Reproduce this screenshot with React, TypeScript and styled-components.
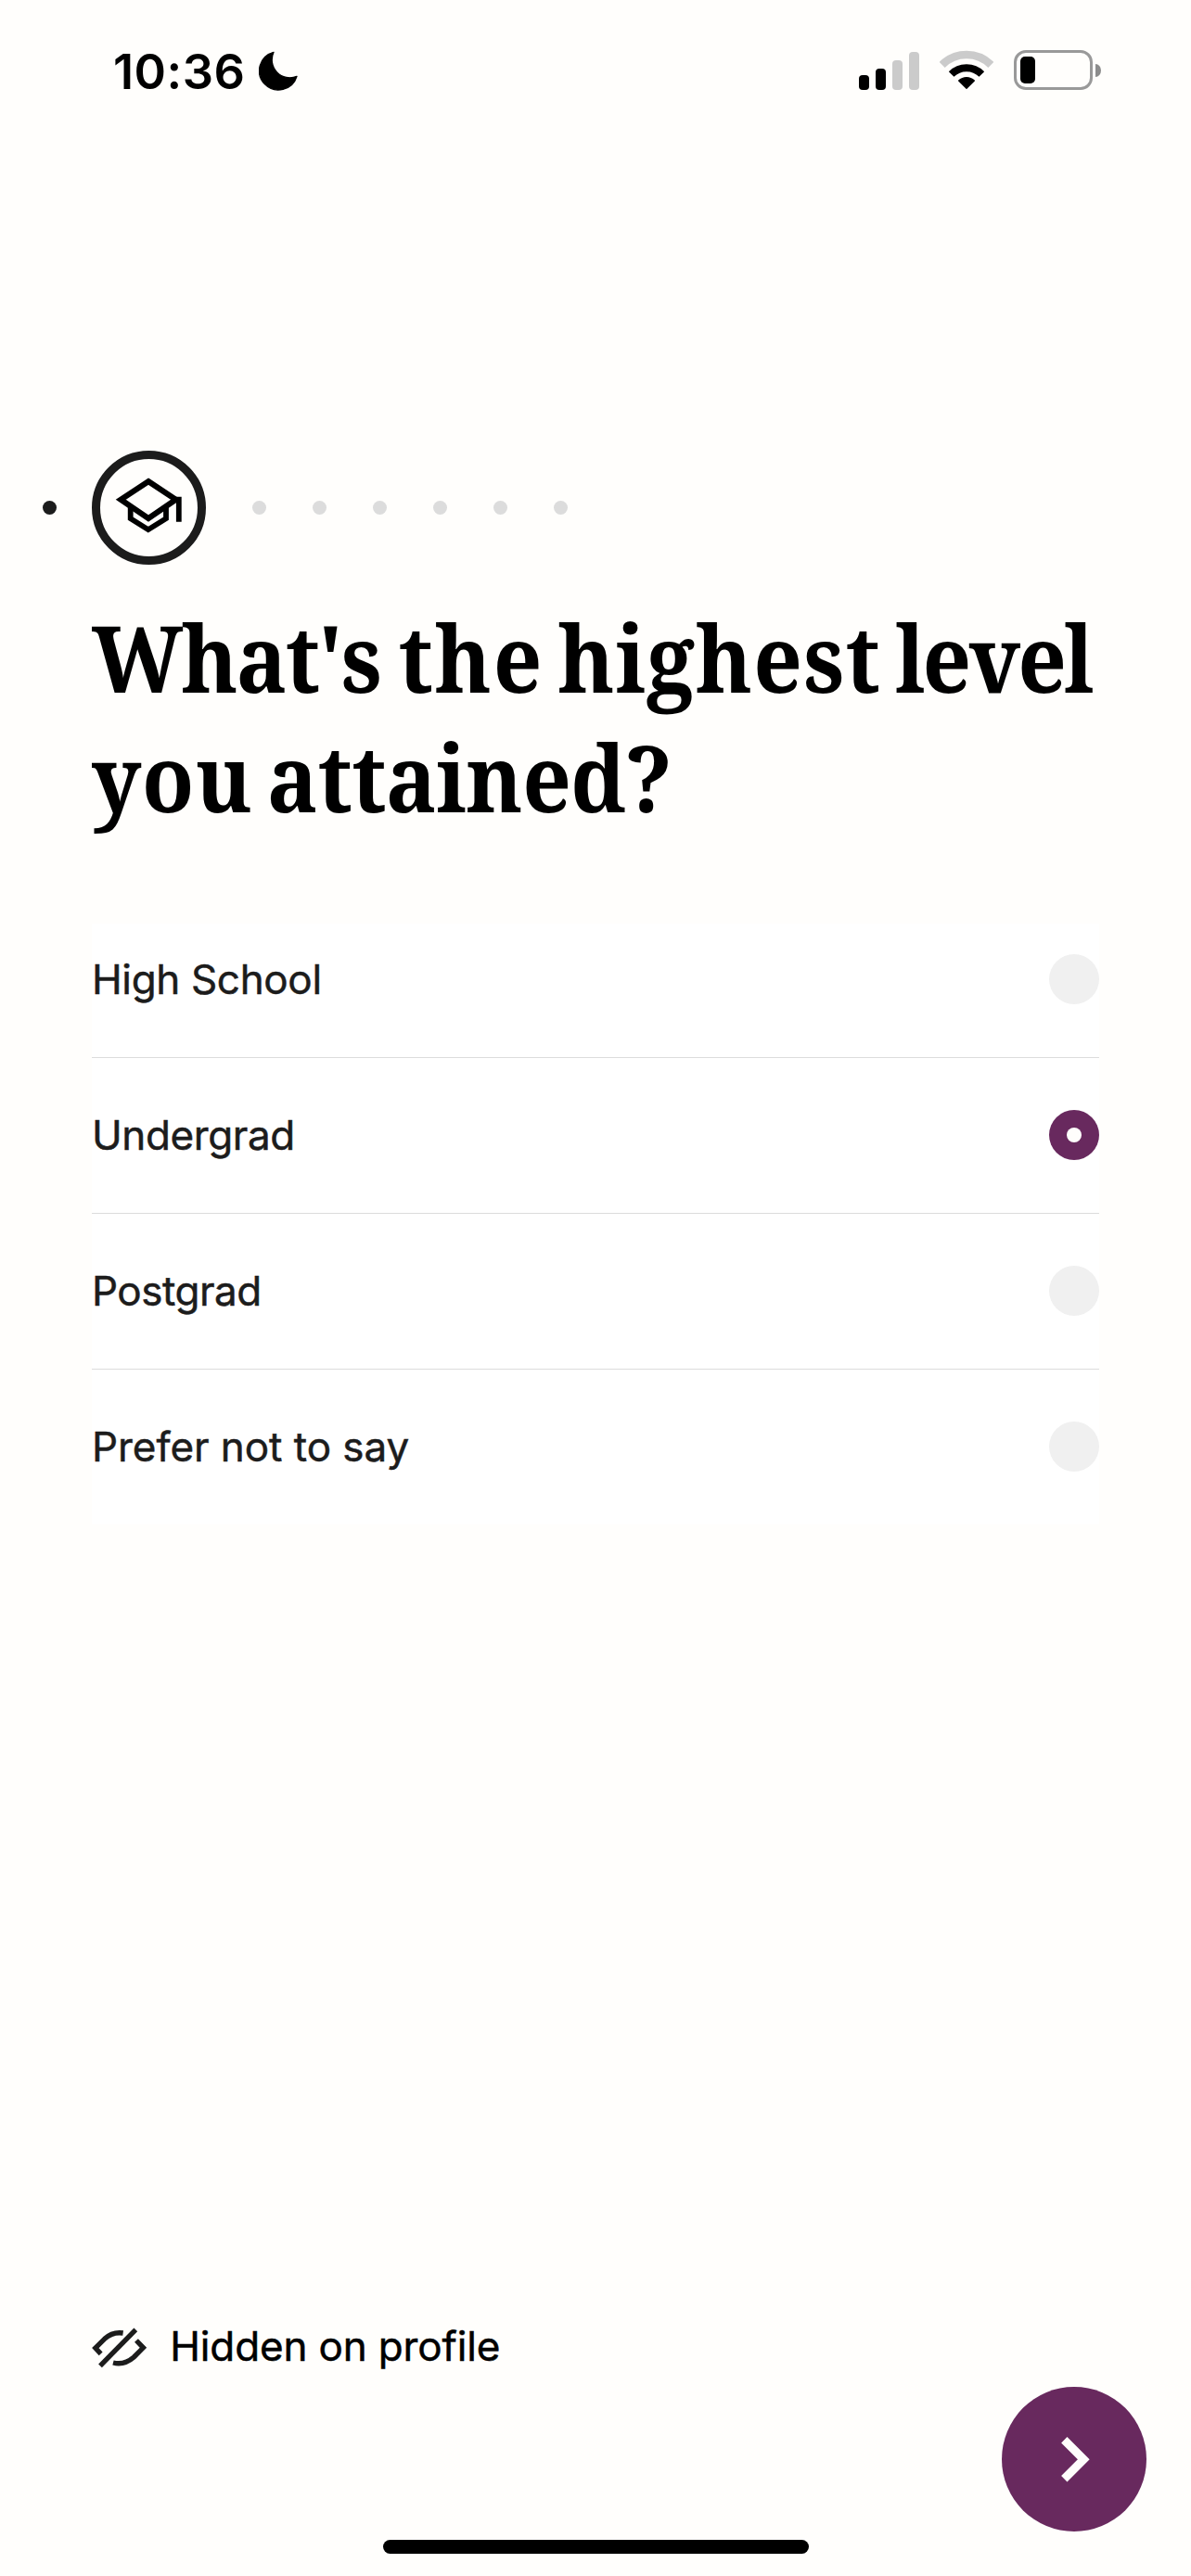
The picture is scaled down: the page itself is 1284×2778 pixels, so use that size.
import React, { useState } from "react";
import styled, { createGlobalStyle } from "styled-components";

const ink = "#1c1c1c";
const plum = "#68295e";

const GlobalStyle = createGlobalStyle`
  *, *::before, *::after { box-sizing: border-box; }
  body { margin: 0; background: #fffefc; }
`;

const Screen = styled.main`
  display: flex;
  flex-direction: column;
  width: 1284px;
  height: 2778px;
  overflow: hidden;
  background: #fffefc;
  color: ${ink};
  font-family: Inter, "Liberation Sans", sans-serif;
`;

const StatusBar = styled.header`
  display: flex;
  align-items: center;
  justify-content: space-between;
  height: 153px;
  padding: 0 97px 0 122px;
  color: #000;
`;

const Clock = styled.div`
  display: flex;
  align-items: center;
  gap: 14px;
`;

const Time = styled.time`
  width: 143px;
  font-size: 52.3px;
  font-weight: 600;
  line-height: 60px;
  letter-spacing: 0.5px;
  white-space: nowrap;
`;

const Indicators = styled.div`
  display: flex;
  align-items: center;
  margin-top: -2px;
`;

const Signal = styled.div`
  display: flex;
  align-items: flex-end;
  gap: 7px;
  height: 42px;
`;

const SignalBar = styled.span<{ $height: number; $active?: boolean }>`
  width: 11px;
  height: ${(p) => p.$height}px;
  border-radius: 4px;
  background: ${(p) => (p.$active ? "#000" : "#cbcbcb")};
`;

const WifiIcon = styled.svg`
  width: 58px;
  height: 43px;
  margin: 0 22px 0 22px;
`;

const Battery = styled.div`
  display: flex;
  align-items: center;
  gap: 3px;
`;

const BatteryBody = styled.div`
  width: 85px;
  height: 43px;
  padding: 4px;
  border: 3px solid #999;
  border-radius: 13px;
`;

const BatteryLevel = styled.div`
  width: 16px;
  height: 29px;
  border-radius: 5px;
  background: #000;
`;

const BatteryTip = styled.div`
  width: 6px;
  height: 14px;
  border-radius: 0 6px 6px 0 / 0 7px 7px 0;
  background: #8c8c8c;
`;

const Progress = styled.nav`
  display: flex;
  align-items: center;
  height: 123px;
  margin-top: 333px;
  padding-left: 46px;
`;

const Dot = styled.span<{ $done?: boolean }>`
  width: 15px;
  height: 15px;
  border-radius: 50%;
  background: ${(p) => (p.$done ? ink : "#dcdcdc")};
`;

const CurrentStep = styled.div`
  display: flex;
  align-items: center;
  justify-content: center;
  width: 123px;
  height: 123px;
  margin: 0 50px 0 38px;
  border: 9px solid ${ink};
  border-radius: 50%;
`;

const Upcoming = styled.div`
  display: flex;
  gap: 50px;
`;

const Heading = styled.h1`
  margin: 35px 0 94px 99px;
  color: #000;
  font: bold 100px/129px "Noto Serif", "DejaVu Serif Condensed", "Liberation Serif", serif;
  word-spacing: -9.5px;
  white-space: nowrap;
  transform: scaleX(0.92);
  transform-origin: left;
`;

const Track = styled.span<{ $by: number; $end?: number }>`
  margin-right: ${(p) => p.$end ?? 0}px;
  letter-spacing: ${(p) => p.$by}px;
`;

const Options = styled.div`
  display: flex;
  flex-direction: column;
  margin: 0 99px;
  background: #fff;
`;

const Option = styled.button`
  display: flex;
  align-items: center;
  justify-content: space-between;
  height: 168px;
  padding: 0 0 1px;
  border: 0;
  border-top: 1px solid #dcdcdc;
  background: none;
  color: ${ink};
  font: inherit;
  cursor: pointer;

  &:first-child {
    height: 144px;
    padding-bottom: 24px;
    border-top: 0;
  }
`;

const Label = styled.span<{ $tracking: number }>`
  font-size: 44px;
  line-height: 56px;
  letter-spacing: ${(p) => p.$tracking}px;
  -webkit-text-stroke: 0.5px currentColor;
`;

const Radio = styled.span<{ $checked: boolean }>`
  display: flex;
  align-items: center;
  justify-content: center;
  width: 54px;
  height: 54px;
  border-radius: 50%;
  background: ${(p) => (p.$checked ? plum : "#f0f0f0")};

  &::after {
    content: "";
    display: ${(p) => (p.$checked ? "block" : "none")};
    width: 16px;
    height: 16px;
    border-radius: 50%;
    background: #fffefc;
  }
`;

const Visibility = styled.div`
  display: flex;
  align-items: center;
  gap: 24px;
  height: 60px;
  margin: auto 0 14px 98px;
  color: #000;
`;

const EyeIcon = styled.svg`
  width: 61.3px;
  height: 45.3px;
  margin-top: 3px;
`;

const NextButton = styled.button`
  display: flex;
  align-items: center;
  justify-content: center;
  align-self: flex-end;
  width: 156px;
  height: 156px;
  margin-right: 48px;
  padding: 0;
  border: 0;
  border-radius: 50%;
  background: ${plum};
  cursor: pointer;
`;

const HomeIndicator = styled.div`
  align-self: center;
  width: 459px;
  height: 15px;
  margin: 9px 0 24px;
  border-radius: 8px;
  background: #000;
`;

const options = [
  { name: "High School", tracking: -0.35 },
  { name: "Undergrad", tracking: -0.4 },
  { name: "Postgrad", tracking: -0.5 },
  { name: "Prefer not to say", tracking: -0.05 },
];

export default function App() {
  const [selected, setSelected] = useState("Undergrad");
  return (
    <>
      <GlobalStyle />
      <Screen>
        <StatusBar>
          <Clock>
            <Time>10:36</Time>
            <svg width="43" height="43" viewBox="535 78 129 129">
              <path
                d="M583 82A62 62 0 1 0 658 160A58 58 0 0 1 583 82Z"
                fill="#000"
                stroke="#000"
                strokeWidth="4"
                strokeLinejoin="round"
              />
            </svg>
          </Clock>
          <Indicators>
            <Signal>
              <SignalBar $height={16} $active />
              <SignalBar $height={23} $active />
              <SignalBar $height={32} />
              <SignalBar $height={41} />
            </Signal>
            <WifiIcon viewBox="338 71 174 129" fill="none">
              <path d="M345.8 118.8A112 112 0 0 1 504.2 118.8" stroke="#cbcbcb" strokeWidth="26" />
              <path d="M375.9 148.9A69.5 69.5 0 0 1 474.1 148.9" stroke="#000" strokeWidth="24" />
              <path
                d="M425 195L400 170A36 36 0 0 1 450 170Z"
                fill="#000"
                stroke="#000"
                strokeWidth="4"
                strokeLinejoin="round"
              />
            </WifiIcon>
            <Battery>
              <BatteryBody>
                <BatteryLevel />
              </BatteryBody>
              <BatteryTip />
            </Battery>
          </Indicators>
        </StatusBar>

        <Progress>
          <Dot $done />
          <CurrentStep>
            <svg width="105" height="105" viewBox="9 9 105 105" fill="none" stroke="#000" strokeWidth="6.2">
              <path d="M61 33.2L90.5 52.7L61 73L31.3 52.7Z" />
              <path d="M41.7 61V73.2L60.8 85.1L80 73.2V61" strokeWidth="5.8" />
              <path d="M88 52.7H93.8V76.8" strokeWidth="5.8" />
            </svg>
          </CurrentStep>
          <Upcoming>
            {[0, 1, 2, 3, 4, 5].map((n) => (
              <Dot key={n} />
            ))}
          </Upcoming>
        </Progress>

        <Heading>
          <Track $by={-2.2} $end={5}>What's</Track>{" "}
          <Track $by={1.9}>the</Track>{" "}
          <Track $by={1.2}>highest</Track>{" "}
          <Track $by={-3.1}>level</Track>
          <br />
          <Track $by={0.9}>you</Track>{" "}
          <Track $by={-0.6}>attained?</Track>
        </Heading>

        <Options>
          {options.map((o) => (
            <Option key={o.name} onClick={() => setSelected(o.name)}>
              <Label $tracking={o.tracking}>{o.name}</Label>
              <Radio $checked={o.name === selected} />
            </Option>
          ))}
        </Options>

        <Visibility>
          <EyeIcon viewBox="54 116 184 136" fill="none" stroke={ink} strokeWidth="16">
            <path d="M199 126L84 243" />
            <path d="M86 204L68.500 185.500L98 156Q124 132 158 137" />
            <path d="M201 161L223.500 184.500L193 215Q162 242 126 233" />
          </EyeIcon>
          <Label $tracking={-0.15}>Hidden on profile</Label>
        </Visibility>
        <NextButton aria-label="Next">
          <svg width="156" height="156" viewBox="0 0 156 156" fill="none">
            <path d="M67.300 57.300L88.300 78.300L67.300 99.300" stroke="#fffefc" strokeWidth="9" />
          </svg>
        </NextButton>
        <HomeIndicator />
      </Screen>
    </>
  );
}
